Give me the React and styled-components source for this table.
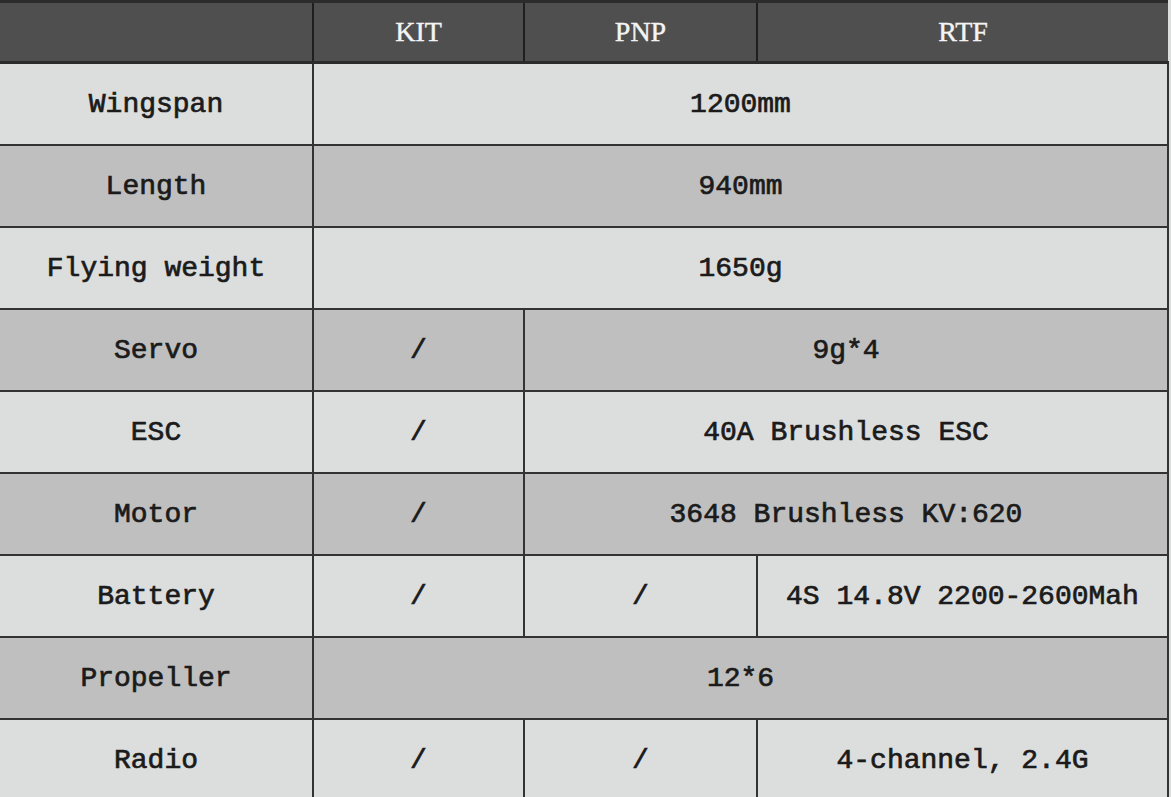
import React from "react";
import styled, { createGlobalStyle } from "styled-components";

const Global = createGlobalStyle`
  body {
    margin: 0;
    background: #dcdddd;
  }
`;

const Table = styled.table`
  width: 1168px;
  border-collapse: collapse;
  table-layout: fixed;
  border-top: 3px solid #2b2b2b;
  font-family: "Liberation Mono", "Courier New", monospace;
`;

const Col = styled.col`
  width: ${(p) => p.$w}px;
`;

const HeadCell = styled.th`
  height: 58px;
  padding: 0;
  background: #4f4f4f;
  color: #f4f4f4;
  font-family: "Liberation Serif", "Times New Roman", serif;
  font-size: 28px;
  font-weight: normal;
  -webkit-text-stroke: 0.4px #f4f4f4;
  text-align: center;
  border-left: 2px solid #1f1f1f;
  border-bottom: 3px solid #2b2b2b;
  &:first-child {
    border-left: none;
  }
`;

const Cell = styled.td`
  height: 80px;
  padding: 0;
  background: ${(p) => (p.$dark ? "#bfbfbf" : "#dcdddd")};
  color: #1b1b1b;
  font-size: 28px;
  font-weight: normal;
  -webkit-text-stroke: 0.7px #1b1b1b;
  text-align: center;
  border: 2px solid #333;
  border-top: none;
  &:first-child {
    border-left: none;
  }
`;

const widths = [313, 211, 233, 411];

const rows = [
  { label: "Wingspan", cells: [{ text: "1200mm", span: 3 }] },
  { label: "Length", cells: [{ text: "940mm", span: 3 }] },
  { label: "Flying weight", cells: [{ text: "1650g", span: 3 }] },
  { label: "Servo", cells: [{ text: "/" }, { text: "9g*4", span: 2 }] },
  { label: "ESC", cells: [{ text: "/" }, { text: "40A Brushless ESC", span: 2 }] },
  { label: "Motor", cells: [{ text: "/" }, { text: "3648 Brushless KV:620", span: 2 }] },
  { label: "Battery", cells: [{ text: "/" }, { text: "/" }, { text: "4S 14.8V 2200-2600Mah" }] },
  { label: "Propeller", cells: [{ text: "12*6", span: 3 }] },
  { label: "Radio", cells: [{ text: "/" }, { text: "/" }, { text: "4-channel, 2.4G" }] },
];

export default function App() {
  return (
    <>
      <Global />
      <Table>
        <colgroup>
          {widths.map((w, i) => (
            <Col key={i} $w={w} />
          ))}
        </colgroup>
        <thead>
          <tr>
            <HeadCell />
            <HeadCell>KIT</HeadCell>
            <HeadCell>PNP</HeadCell>
            <HeadCell>RTF</HeadCell>
          </tr>
        </thead>
        <tbody>
          {rows.map((row, i) => (
            <tr key={row.label}>
              <Cell $dark={i % 2 === 1}>{row.label}</Cell>
              {row.cells.map((c, j) => (
                <Cell key={j} $dark={i % 2 === 1} colSpan={c.span || 1}>
                  {c.text}
                </Cell>
              ))}
            </tr>
          ))}
        </tbody>
      </Table>
    </>
  );
}
